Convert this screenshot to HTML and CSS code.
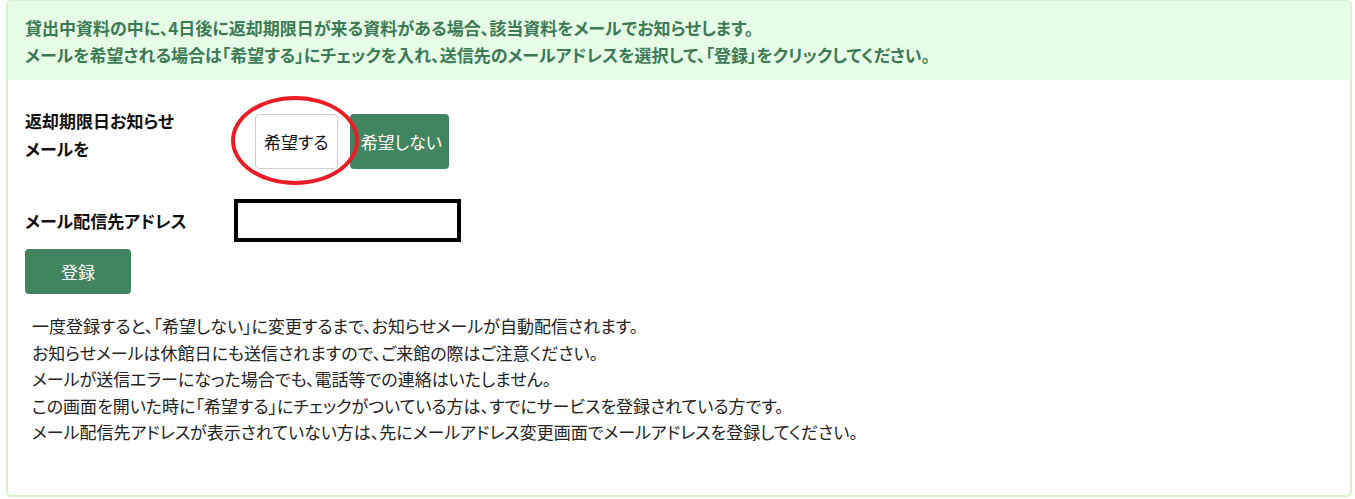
FILE: index.html
```html
<!DOCTYPE html>
<html lang="ja">
<head>
    <meta charset="UTF-8">
    <meta name="viewport" content="width=device-width, initial-scale=1.0">
    <link rel="stylesheet" href="styles.css">
</head>
<body>
<div class="panel">
    <div class="panel-head">
        <p>貸出中資料の中に、4日後に返却期限日が来る資料がある場合、該当資料をメールでお知らせします。</p>
        <p>メールを希望される場合は「希望する」にチェックを入れ、送信先のメールアドレスを選択して、「登録」をクリックしてください。</p>
    </div>

    <div class="panel-body">
        <form class="mail-form">
            <div class="form-row">
                <div class="form-label">返却期限日お知らせ<br>メールを</div>
                <div class="form-field choice">
                    <label class="choice-btn on">希望する</label>
                    <label class="choice-btn off">希望しない</label>
                    <!-- annotation ring over the selected button -->
                    <span class="mark"></span>
                </div>
            </div>
            <div class="form-row">
                <div class="form-label">メール配信先アドレス</div>
                <div class="form-field">
                    <div class="address-box"></div>
                </div>
            </div>
            <button type="button" class="submit-btn">登録</button>
        </form>

        <ul class="notes">
            <li>一度登録すると、「希望しない」に変更するまで、お知らせメールが自動配信されます。</li>
            <li>お知らせメールは休館日にも送信されますので、ご来館の際はご注意ください。</li>
            <li>メールが送信エラーになった場合でも、電話等での連絡はいたしません。</li>
            <li>この画面を開いた時に「希望する」にチェックがついている方は、すでにサービスを登録されている方です。</li>
            <li>メール配信先アドレスが表示されていない方は、先にメールアドレス変更画面でメールアドレスを登録してください。</li>
        </ul>
    </div>
</div>
</body>
</html>
```

FILE: styles.css
```css
body {
    margin: 0;
    padding: 0 3px 2px 6px;
    font-family: "Noto Sans CJK JP", "Noto Sans", sans-serif;
    font-size: 17px;
    font-feature-settings: "palt";
    color: #222;
    background-color: #fff;
}

.panel {
    border: 2px solid #d9f1cc;
    border-top-width: 1px;
    border-radius: 5px;
    min-height: 497px;
    box-sizing: border-box;
    overflow: hidden;
}

.panel-head {
    background-color: #e6fde6;
    color: #3c7a55;
    font-weight: bold;
    padding: 13px 17px 12px;
}

.panel-head p {
    margin: 0;
    line-height: 27px;
}

.panel-body {
    padding: 27px 17px 40px;
}

.mail-form {
    display: flex;
    flex-direction: column;
    align-items: flex-start;
}

.form-row {
    display: flex;
    align-items: flex-start;
}

.form-label {
    width: 209px;
    font-weight: bold;
    color: #111;
    line-height: 28px;
}

.form-field {
    display: flex;
    align-items: center;
}

.choice {
    position: relative;
    gap: 12px;
    padding-left: 21px;
    margin-top: 7px;
}

.choice-btn {
    display: flex;
    align-items: center;
    height: 55px;
    box-sizing: border-box;
    border-radius: 4px;
    padding: 0 8px;
    cursor: pointer;
}

.choice-btn.on {
    background-color: #fff;
    border: 1px solid #cfcfcf;
    color: #111;
}

.choice-btn.off {
    background-color: #418560;
    color: #fff;
    padding: 0 7px 0 11px;
}

.mark {
    position: absolute;
    left: -3px;
    top: -18px;
    width: 128px;
    height: 89px;
    box-sizing: border-box;
    border: 4px solid #ea1c25;
    border-radius: 50%;
    pointer-events: none;
}

.form-row + .form-row {
    margin-top: 30px;
    align-items: center;
}

.address-box {
    width: 227px;
    height: 43px;
    box-sizing: border-box;
    border: 4px solid #000;
    background-color: #fff;
}

.submit-btn {
    margin-top: 7px;
    width: 106px;
    height: 45px;
    border: none;
    border-radius: 4px;
    background-color: #418560;
    color: #fff;
    font-family: inherit;
    font-size: 17px;
    font-feature-settings: "palt";
    cursor: pointer;
}

.notes {
    list-style-type: none;
    margin: 19px 0 0;
    padding: 0 0 0 7px;
}

.notes li {
    line-height: 26.5px;
}
```
